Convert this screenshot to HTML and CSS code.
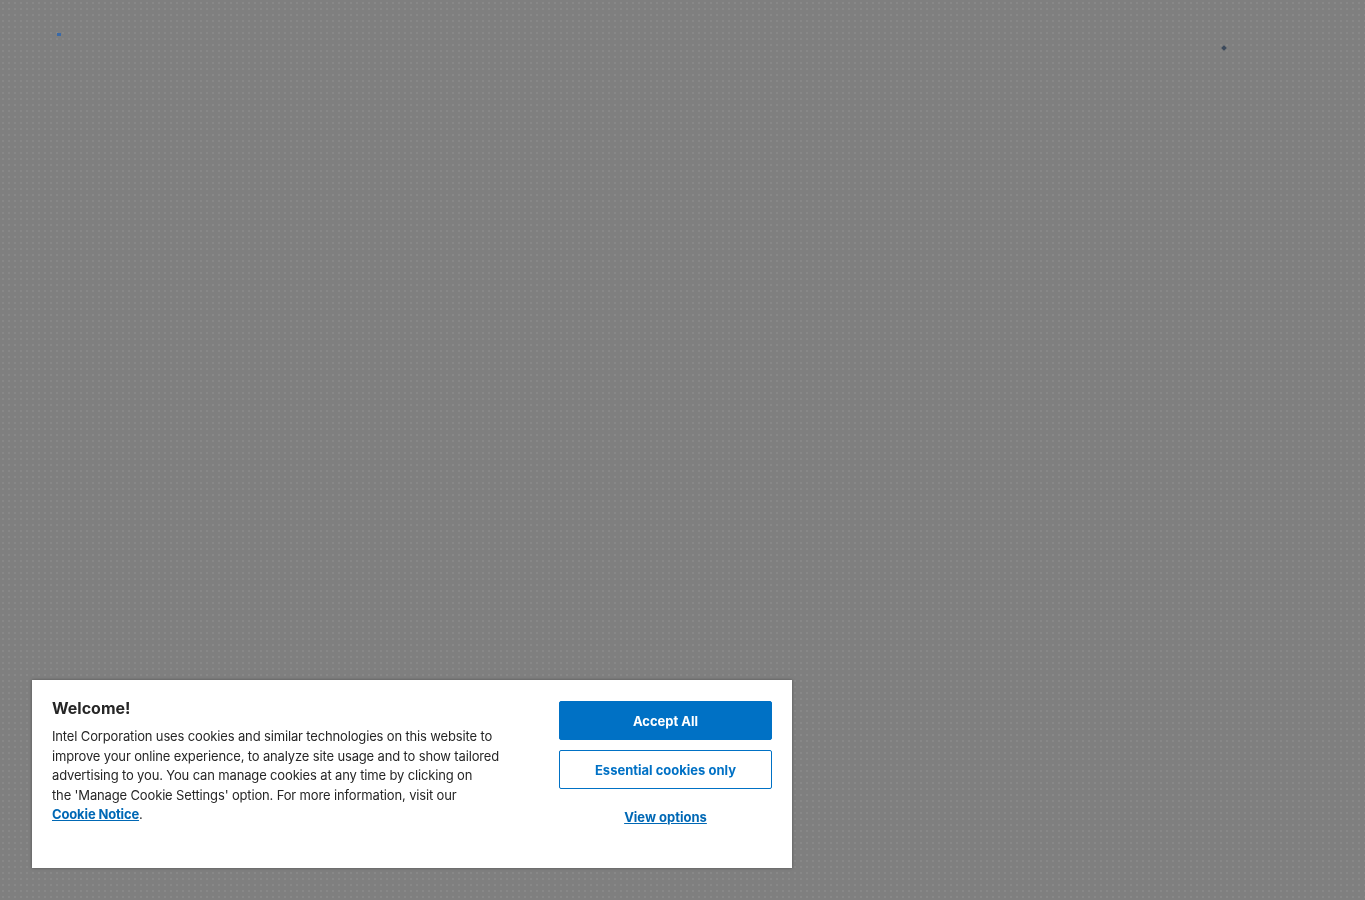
FILE: index.html
```html
<!DOCTYPE html>
<html lang="en">
<head>
    <meta charset="UTF-8">
    <meta name="viewport" content="width=device-width, initial-scale=1.0">
    <title>Intel</title>
    <link rel="stylesheet" href="styles.css">
</head>
<body>
    <div class="page">
        <span class="mark-left"></span>
        <span class="mark-right"></span>
    </div>

    <!-- cookie banner -->
    <div class="cookie-banner">
        <div class="cookie-text">
            <h2 class="cookie-title">Welcome!</h2>
            <p class="cookie-body">Intel Corporation uses cookies and similar technologies on this website to<br>
                improve your online experience, to analyze site usage and to show tailored<br>
                advertising to you. You can manage cookies at any time by clicking on<br>
                the 'Manage Cookie Settings' option. For more information, visit our<br>
                <a href="#">Cookie Notice</a>.</p>
        </div>
        <div class="cookie-actions">
            <button class="btn-accept">Accept All</button>
            <button class="btn-essential">Essential cookies only</button>
            <a class="view-options" href="#">View options</a>
        </div>
    </div>
</body>
</html>
```

FILE: styles.css
```css
/* page background, grey overlay with faint dots */
html, body {
    margin: 0;
    height: 100%;
}

body {
    background-color: #7f7f7f;
    background-image: radial-gradient(circle, rgba(255,255,255,0.07) 0.8px, transparent 1.2px);
    background-size: 6px 6px;
    font-family: Inter, "Noto Sans", sans-serif;
    color: #262626;
    overflow: hidden;
}

.page {
    position: relative;
    height: 100%;
}

/* tiny marks left over from the page under the overlay */
.mark-left {
    position: absolute;
    left: 57px; top: 33px;
    width: 4px; height: 3px;
    background: #3a6aa8;
}

.mark-right {
    position: absolute;
    left: 1222px; top: 46px;
    width: 4px; height: 4px;
    background: #3c4a5c;
    transform: rotate(45deg);
}

/* banner box */
.cookie-banner {
    position: fixed;
    left: 32px; bottom: 32px;
    width: 760px; height: 188px;
    box-sizing: border-box;
    padding: 18px 20px 20px 20px;
    background: #fff;
    box-shadow: 0 0 3px rgba(0,0,0,0.35);
    display: flex;
    justify-content: space-between;
}

.cookie-text {
    width: 470px;
}

.cookie-title {
    margin: 0 0 9px 0;
    font-size: 16px;
    font-weight: 700;
    line-height: 20px;
    color: #262626;
}

.cookie-body {
    margin: 0;
    font-size: 13px;
    line-height: 19.6px;
    letter-spacing: -0.15px;
    white-space: nowrap;
}

.cookie-body a {
    color: #0068b5;
    font-weight: 700;
    text-decoration: underline;
}

/* buttons on the right */
.cookie-actions {
    width: 213px;
    display: flex;
    flex-direction: column;
    align-items: center;
}

.cookie-actions button {
    width: 213px; height: 39px;
    border-radius: 2px;
    font-family: inherit;
    font-size: 13px;
    font-weight: 700;
    cursor: pointer;
}

.btn-accept {
    margin-top: 3px;
    background: #0071c5;
    border: 1px solid #0071c5;
    color: #fff;
}

.btn-essential {
    margin-top: 10px;
    background: #fff;
    border: 1px solid #0071c5;
    color: #0071c5;
}

.view-options {
    margin-top: 20px;
    font-size: 13px;
    font-weight: 700;
    color: #0068b5;
    text-decoration: underline;
}
```
